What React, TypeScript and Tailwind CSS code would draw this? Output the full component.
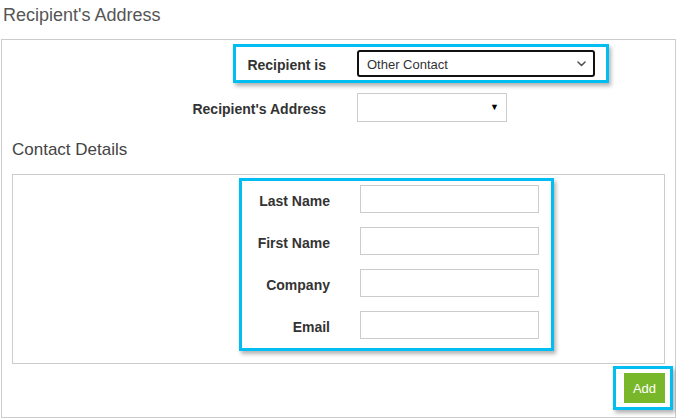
import React from "react";

const fieldLabels = ["Last Name", "First Name", "Company", "Email"];

function ChevronDown() {
  return (
    <svg width="9" height="6" viewBox="0 0 9 6" fill="none">
      <path d="M1 1 L4.5 4.5 L8 1" stroke="#555" strokeWidth="1.6" strokeLinecap="round" strokeLinejoin="round" />
    </svg>
  );
}

export default function App() {
  return (
    <div className="h-[418px] w-[676px] overflow-hidden bg-white font-['Liberation_Sans',Arial,sans-serif]">
      <h2 className="pl-[3px] pt-[4px] text-[18px] leading-[23px] text-[#555]">Recipient's Address</h2>

      <div className="ml-px mt-[12px] h-[379px] w-[675px] border border-[#ccc]">
        {/* recipient type */}
        <div className="ml-[231px] mt-[4px] flex h-[39px] w-[376px] items-center border-[3px] border-[#00bef2] shadow-[2px_3px_4px_rgba(0,0,0,0.3)]">
          <span className="w-[90px] pt-[4px] text-right text-[14px] font-bold text-[#333]">Recipient is</span>
          <div className="ml-[31px] flex h-[27px] w-[238px] items-center justify-between rounded-[3px] border-2 border-[#111] pl-[8px] pr-[7px] text-[13px] text-[#333]">
            <span className="pt-[3px]">Other Contact</span>
            <ChevronDown />
          </div>
        </div>

        <div className="mt-[10px] flex h-[29px] items-center">
          <span className="w-[324px] pt-[4px] text-right text-[14px] font-bold text-[#333]">Recipient's Address</span>
          <div className="ml-[31px] flex h-[29px] w-[150px] items-center justify-end border border-[#ccc] pr-[7px] text-[9px] text-black">
            ▼
          </div>
        </div>

        <h3 className="mt-[16px] pl-[10px] text-[17px] leading-[24px] text-[#444]">Contact Details</h3>

        <div className="ml-[10px] mt-[12px] h-[190px] w-[653px] border border-[#ccc]">
          <div className="ml-[226px] mt-[3px] flex h-[173px] w-[315px] flex-col gap-[14px] border-[3px] border-[#00bef2] pt-[4px] shadow-[2px_3px_4px_rgba(0,0,0,0.3)]">
            {fieldLabels.map((label) => (
              <div key={label} className="flex h-[28px] items-center">
                <span className="w-[88px] pt-[4px] text-right text-[14px] font-bold text-[#333]">{label}</span>
                <div className="ml-[30px] h-[28px] w-[179px] border border-[#ccc]" />
              </div>
            ))}
          </div>
        </div>

        <div className="mt-[2px] flex justify-end pr-[2px]">
          <div className="h-[44px] w-[60px] border-[3px] border-[#00bef2] pl-[8px] pt-[4px] shadow-[2px_3px_4px_rgba(0,0,0,0.3)]">
            <button className="flex h-[30px] w-[41px] items-center justify-center bg-[#78b72a] pt-[1px] text-[13px] text-white">
              Add
            </button>
          </div>
        </div>
      </div>
    </div>
  );
}
